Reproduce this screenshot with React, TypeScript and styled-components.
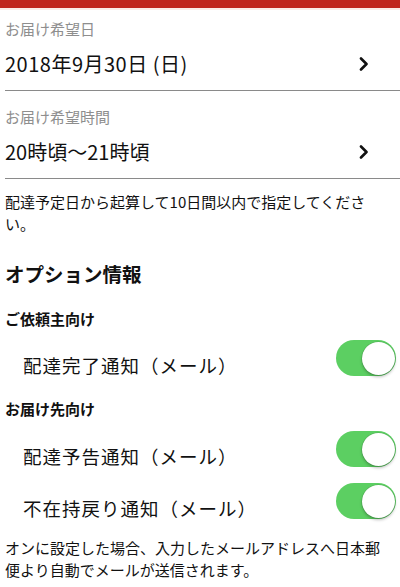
import styled, { createGlobalStyle } from "styled-components";

const GlobalStyle = createGlobalStyle`
  html, body {
    margin: 0;
    padding: 0;
    background: #ffffff;
  }
  body {
    font-family: "Noto Sans CJK JP", "Noto Sans", sans-serif;
    color: #111111;
  }
`;

const Chevron = () => (
  <svg width="10" height="14" viewBox="0 0 10 14">
    <polyline
      points="2,1.5 7.5,7 2,12.5"
      fill="none"
      stroke="#111"
      strokeWidth="2.6"
      strokeLinecap="round"
      strokeLinejoin="round"
    />
  </svg>
);

type SwitchProps = { on?: boolean };

const Switch = ({ on = true }: SwitchProps) => (
  <Track $on={on}>
    <Knob $on={on} />
  </Track>
);

const App = () => {
  return (
    <Page>
      <GlobalStyle />
      <TopBar />
      <Field $top={11}>
        <FieldLabel>お届け希望日</FieldLabel>
        <ValueRow>
          <Value $spacing={0.5}>2018年9月30日 (日)</Value>
          <Chevron />
        </ValueRow>
      </Field>
      <Field $top={18}>
        <FieldLabel>お届け希望時間</FieldLabel>
        <ValueRow>
          <Value>20時頃〜21時頃</Value>
          <Chevron />
        </ValueRow>
      </Field>
      <Note $top={12}>
        配達予定日から起算して10日間以内で指定してください。
      </Note>
      <Heading>オプション情報</Heading>
      <SubHeading $top={21}>ご依頼主向け</SubHeading>
      <OptionRow $top={11}>
        <OptionText>配達完了通知（メール）</OptionText>
        <Switch />
      </OptionRow>
      <SubHeading $top={22}>お届け先向け</SubHeading>
      <OptionRow $top={12}>
        <OptionText>配達予告通知（メール）</OptionText>
        <Switch />
      </OptionRow>
      <OptionRow $top={15}>
        <OptionText>不在持戻り通知（メール）</OptionText>
        <Switch />
      </OptionRow>
      <Note $top={17}>
        オンに設定した場合、入力したメールアドレスへ日本郵便より自動でメールが送信されます。
      </Note>
    </Page>
  );
};
export default App;

const Page = styled.div`
  width: 400px;
  height: 587px;
  overflow: hidden;
  display: flex;
  flex-direction: column;
  background: #ffffff;
`;

const TopBar = styled.div`
  height: 8px;
  background: #c0271d;
  border-bottom: 2px solid #fbeee8;
  flex-shrink: 0;
`;

const Field = styled.div<{ $top: number }>`
  padding-top: ${(p) => p.$top - 2}px;
  padding-left: 5px;
  display: flex;
  flex-direction: column;
`;

const FieldLabel = styled.div`
  height: 20px;
  line-height: 20px;
  font-size: 15px;
  color: #8e8e8e;
`;

const ValueRow = styled.div`
  margin-top: 5px;
  padding: 0 31px 6px 0;
  display: flex;
  align-items: center;
  justify-content: space-between;
  border-bottom: 1px solid #8a8a8a;
`;

const Value = styled.div<{ $spacing?: number }>`
  height: 40px;
  line-height: 40px;
  font-size: 20px;
  letter-spacing: ${(p) => p.$spacing ?? 0}px;
  color: #111111;
`;

const Note = styled.div<{ $top: number }>`
  margin-top: ${(p) => p.$top}px;
  padding: 0 13px 0 5px;
  font-size: 15px;
  line-height: 22px;
  color: #111111;
`;

const Heading = styled.div`
  margin-top: 25px;
  padding-left: 5px;
  height: 28px;
  line-height: 28px;
  font-size: 19.5px;
  font-weight: 700;
  color: #111111;
`;

const SubHeading = styled.div<{ $top: number }>`
  margin-top: ${(p) => p.$top}px;
  padding-left: 5px;
  height: 20px;
  line-height: 20px;
  font-size: 15px;
  font-weight: 700;
  color: #111111;
`;

const OptionRow = styled.div<{ $top: number }>`
  margin-top: ${(p) => p.$top}px;
  height: 37px;
  padding: 0 4px 0 23px;
  display: flex;
  align-items: flex-end;
  justify-content: space-between;
`;

const OptionText = styled.div`
  height: 24px;
  line-height: 24px;
  font-size: 18.5px;
  letter-spacing: 1px;
  white-space: nowrap;
  color: #111111;
`;

const Track = styled.div<{ $on: boolean }>`
  align-self: flex-start;
  position: relative;
  width: 60px;
  height: 36px;
  border-radius: 18px;
  background: ${(p) => (p.$on ? "#5ccf62" : "#e5e5ea")};
  flex-shrink: 0;
`;

const Knob = styled.div<{ $on: boolean }>`
  position: absolute;
  top: 1.5px;
  left: ${(p) => (p.$on ? "26px" : "1.5px")};
  width: 33px;
  height: 33px;
  border-radius: 50%;
  background: #ffffff;
  box-shadow: 0 2px 3px rgba(0, 0, 0, 0.25), 0 0 0 0.5px rgba(0, 0, 0, 0.15);
`;
